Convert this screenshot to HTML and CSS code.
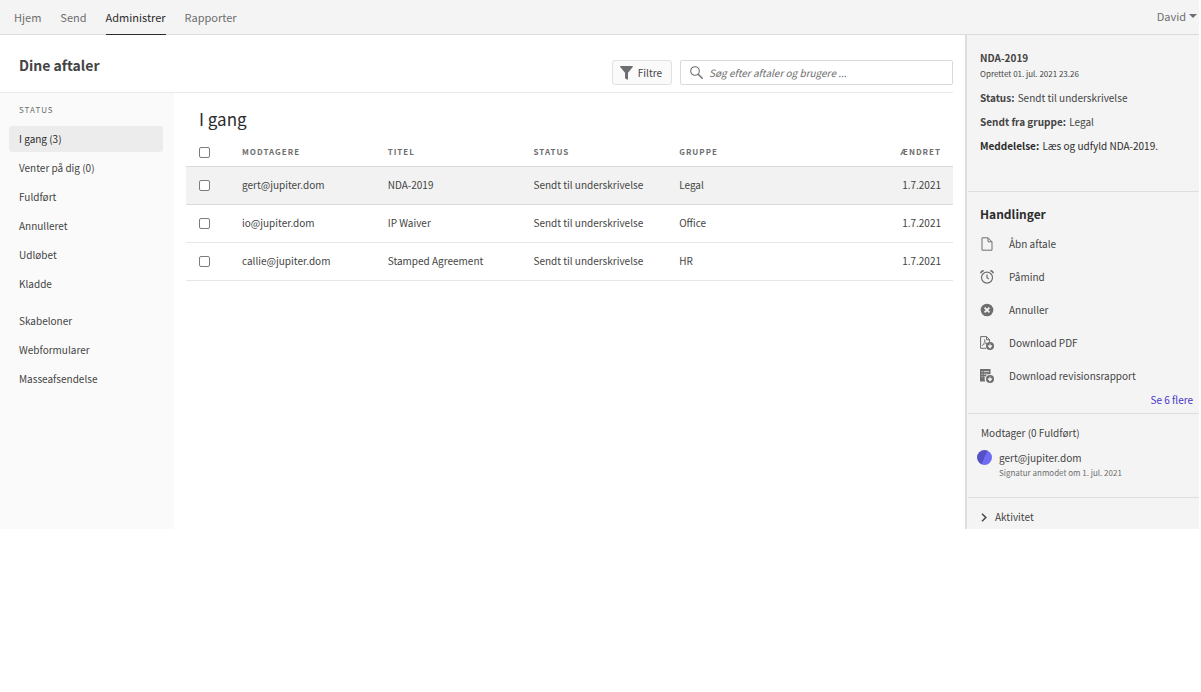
FILE: index.html
```html
<!DOCTYPE html>
<html lang="da">
<head>
<meta charset="utf-8">
<title>Dine aftaler</title>
<link rel="stylesheet" href="styles.css">
</head>
<body>
<div class="app">
  <header class="topbar">
    <nav class="tabs">
      <a class="tab" href="#">Hjem</a>
      <a class="tab" href="#">Send</a>
      <a class="tab tab-active" href="#">Administrer</a>
      <a class="tab" href="#">Rapporter</a>
    </nav>
    <button class="user" type="button">David <span class="caret"></span></button>
  </header>

  <div class="body">
    <div class="workspace">
      <div class="page-head">
        <h1 class="page-title">Dine aftaler</h1>
        <button class="filter" type="button">
          <svg width="13" height="14" viewBox="0 0 13 14"><path fill="#6e6e6e" d="M.7 0h11.6c.6 0 .8.6.5 1L8 6.8V13c0 .6-.6 1-1.100.600L5.300 12.500A.8.8 0 0 1 5 12V6.800L.2 1C-.1.600.1 0 .7 0z"/></svg>
          Filtre
        </button>
        <label class="search">
          <svg width="13" height="13" viewBox="0 0 13 13" fill="none" stroke="#6e6e6e"><circle cx="5" cy="5" r="4.300" stroke-width="1.100"/><path d="M8.200 8.200l4 4" stroke-width="1.400" stroke-linecap="round"/></svg>
          <input class="search-input" type="text" aria-label="Søg" placeholder="Søg efter aftaler og brugere ...">
        </label>
      </div>

      <div class="columns">
        <nav class="sidebar">
          <h2 class="sidebar-label">STATUS</h2>
          <div class="side-group">
            <a class="side-item side-active" href="#">I gang (3)</a>
            <a class="side-item" href="#">Venter på dig (0)</a>
            <a class="side-item" href="#">Fuldført</a>
            <a class="side-item" href="#">Annulleret</a>
            <a class="side-item" href="#">Udløbet</a>
            <a class="side-item" href="#">Kladde</a>
          </div>
          <div class="side-group">
            <a class="side-item" href="#">Skabeloner</a>
            <a class="side-item" href="#">Webformularer</a>
            <a class="side-item" href="#">Masseafsendelse</a>
          </div>
        </nav>

        <main class="content">
          <h2 class="list-title">I gang</h2>
          <table class="list">
            <colgroup>
              <col class="col-check"><col class="col-data"><col class="col-data"><col class="col-data"><col>
              <col class="col-date">
            </colgroup>
            <thead>
              <tr>
                <th><input class="check" type="checkbox" aria-label="Vælg alle"></th>
                <th>MODTAGERE</th><th>TITEL</th><th>STATUS</th><th>GRUPPE</th><th class="date">ÆNDRET</th>
              </tr>
            </thead>
            <tbody>
              <tr class="selected">
                <td><input class="check" type="checkbox" aria-label="Vælg NDA-2019"></td>
                <td>gert@jupiter.dom</td><td>NDA-2019</td><td>Sendt til underskrivelse</td><td>Legal</td><td class="date">1.7.2021</td>
              </tr>
              <tr>
                <td><input class="check" type="checkbox" aria-label="Vælg IP Waiver"></td>
                <td>io@jupiter.dom</td><td>IP Waiver</td><td>Sendt til underskrivelse</td><td>Office</td><td class="date">1.7.2021</td>
              </tr>
              <tr>
                <td><input class="check" type="checkbox" aria-label="Vælg Stamped Agreement"></td>
                <td>callie@jupiter.dom</td><td>Stamped Agreement</td><td>Sendt til underskrivelse</td><td>HR</td><td class="date">1.7.2021</td>
              </tr>
            </tbody>
          </table>
        </main>
      </div>
    </div>

    <aside class="panel">
      <section class="section details">
        <h2 class="doc-title">NDA-2019</h2>
        <p class="small">Oprettet 01. jul. 2021 23.26</p>
        <p class="fact"><b>Status:</b> Sendt til underskrivelse</p>
        <p class="fact"><b>Sendt fra gruppe:</b> Legal</p>
        <p class="fact fact-dark"><b>Meddelelse:</b> Læs og udfyld NDA-2019.</p>
      </section>

      <section class="section actions">
        <h2 class="actions-title">Handlinger</h2>
        <button class="action" type="button">
          <svg width="14" height="14" viewBox="0 0 14 14" fill="none" stroke="#6e6e6e"><path d="M2 .8h6l4 4v8.400H2zM8 .8v4h4"/></svg>
          Åbn aftale
        </button>
        <button class="action" type="button">
          <svg width="14" height="14" viewBox="0 0 14 14" fill="none" stroke="#6e6e6e"><circle cx="7" cy="7.600" r="5.500" stroke-width="1.200"/><path d="M7 4.500v3.300l1.800 1.200" stroke-width="1.200"/><path d="M.8 3.300Q1 1 3.700.8M13.200 3.300Q13 1 10.300.8" stroke-width="1.600"/></svg>
          Påmind
        </button>
        <button class="action" type="button">
          <svg width="14" height="14" viewBox="0 0 14 14"><circle cx="7" cy="7" r="6.300" fill="#6e6e6e"/><path d="M4.600 4.600l4.800 4.800M9.400 4.600l-4.800 4.800" stroke="#f4f4f4" stroke-width="1.800"/></svg>
          Annuller
        </button>
        <button class="action" type="button">
          <svg width="14" height="14" viewBox="0 0 14 14"><path d="M6 12.300H.6V.6h5.900l3.100 3.100V6M6.500.6v3.100h3.100" fill="none" stroke="#6e6e6e"/><path d="M2 9.800C4 8.500 4.900 5.500 4.600 3.500 4.800 6 5.500 7.200 7.300 7.600 5 7.300 3.500 8.200 2 9.800z" fill="none" stroke="#6e6e6e" stroke-width=".7"/><circle cx="10" cy="10" r="4" fill="#6e6e6e"/><path d="M10 7.600v2.600M8.100 9.800h3.800L10 12.200z" fill="#f4f4f4" stroke="#f4f4f4" stroke-width=".9"/></svg>
          Download PDF
        </button>
        <button class="action" type="button">
          <svg width="14" height="14" viewBox="0 0 14 14"><path d="M0 0h10.500v5.200A5 5 0 0 0 5.200 12.500H0z" fill="#6e6e6e"/><path d="M1.500 2.600h1.200M3.800 2.600h5.200M1.500 5.200h1.200M3.800 5.200h4M1.500 7.800h1.200M3.800 7.800h1.200" stroke="#f4f4f4" stroke-width=".8"/><circle cx="10" cy="10" r="4" fill="#6e6e6e"/><path d="M10 7.600v2.600M8.100 9.800h3.800L10 12.200z" fill="#f4f4f4" stroke="#f4f4f4" stroke-width=".9"/></svg>
          Download revisionsrapport
        </button>
        <a class="more" href="#">Se 6 flere</a>
      </section>

      <section class="section recipients">
        <h2 class="recipients-title">Modtager (0 Fuldført)</h2>
        <div class="recipient">
          <span class="avatar"></span>
          <div>
            <p class="mail">gert@jupiter.dom</p>
            <p class="small muted">Signatur anmodet om 1. jul. 2021</p>
          </div>
        </div>
      </section>

      <button class="activity" type="button">
        <svg width="8" height="9" viewBox="0 0 8 9" fill="none" stroke="#4b4b4b" stroke-width="1.600"><path d="M2 .8l3.800 3.700L2 8.200"/></svg>
        Aktivitet
      </button>
    </aside>
  </div>
</div>
</body>
</html>
```
FILE: styles.css
```css
* { box-sizing: border-box; }

body {
  margin: 0;
  background: #fff;
  color: #444;
  font-family: "Noto Sans CJK JP", "Noto Sans", sans-serif;
  font-size: 10px;
  line-height: 16px;
}

h1, h2, p { margin: 0; }
a { color: inherit; text-decoration: none; }
button, input { font: inherit; color: inherit; }
button { border: 0; padding: 0; background: none; text-align: left; cursor: pointer; }
svg { flex: none; }

.app { margin-right: 2px; }

/* Top bar */
.topbar {
  display: flex;
  justify-content: space-between;
  height: 35px;
  padding-left: 14px;
  background: #f4f4f4;
  border-bottom: 1px solid #dcdcdc;
  font-size: 11px;
  color: #6e6e6e;
}
.tabs { display: flex; gap: 19px; }
.tab { height: 35px; line-height: 34px; }
.tab-active { color: #2c2c2c; border-bottom: 1px solid #2c2c2c; }
.user { display: flex; align-items: center; gap: 3px; height: 31px; padding-right: 2px; }
.caret { border: 4px solid transparent; border-top-color: #6e6e6e; border-bottom: 0; }

/* Work area */
.body { display: grid; grid-template-columns: minmax(0, 1fr) 234px; }
.workspace { display: flex; flex-direction: column; }
.page-head {
  display: flex;
  align-items: flex-end;
  gap: 8px;
  height: 58px;
  margin-right: 12px;
  padding: 0 0 7px 19px;
  border-bottom: 1px solid #e8e8e8;
}
.page-title { margin-right: auto; padding-bottom: 10px; font-size: 14px; line-height: 20px; }
.filter {
  display: flex;
  align-items: center;
  gap: 5px;
  height: 25px;
  padding: 0 9px 0 7px;
  border: 1px solid #e1e1e1;
  border-radius: 3px;
  background: #fafafa;
}
.search {
  display: flex;
  align-items: center;
  gap: 6px;
  width: 273px;
  height: 25px;
  padding: 0 9px;
  border: 1px solid #d9d9d9;
  border-radius: 2px;
}
.search-input { flex: 1; min-width: 0; padding: 0; border: 0; outline: 0; background: none; }
.search-input::placeholder { color: #6e6e6e; font-style: italic; opacity: 1; }

.columns { display: flex; flex: 1; }

/* Sidebar */
.sidebar { width: 174px; padding: 9px 11px 0 9px; background: #fafafa; }
.sidebar-label {
  margin-bottom: 8px;
  padding-left: 10px;
  font-size: 8px;
  font-weight: 400;
  letter-spacing: 1px;
  color: #6e6e6e;
}
.side-group { display: flex; flex-direction: column; gap: 3px; margin-bottom: 11px; }
.side-item { height: 26px; padding-left: 10px; line-height: 25px; border-radius: 3px; }
.side-active { background: #ececec; color: #2c2c2c; }

/* Agreement list */
.content { flex: 1; min-width: 0; padding: 14px 12px 0; }
.list-title { padding-left: 13px; font-size: 17px; font-weight: 400; line-height: 24px; color: #2c2c2c; }
.list { width: 100%; margin-top: 8px; border-collapse: collapse; table-layout: fixed; }
.col-check { width: 56px; }
.col-data { width: 19%; }
.col-date { width: 80px; }
.list th, .list td { padding: 0; text-align: left; white-space: nowrap; border-bottom: 1px solid #e6e6e6; }
.list th { height: 27px; font-size: 8px; letter-spacing: 1px; color: #6e6e6e; border-color: #dadada; }
.list td { height: 38px; }
.list .date { padding-right: 12px; text-align: right; }
.selected td { background: #f2f2f2; border-color: #dadada; }
.check {
  display: block;
  appearance: none;
  width: 11px;
  height: 11px;
  margin: 0 0 0 13px;
  border: 1px solid #7c7c7c;
  border-radius: 2px;
  background: #fff;
}

/* Details panel */
.panel { padding-left: 1px; background: #f4f4f4; border-left: 2px solid #dedede; }
.section { border-bottom: 1px solid #dedede; }
.details { height: 157px; padding: 15px 12px 0; }
.doc-title { font-size: 10px; line-height: 16px; }
.small { font-size: 8px; }
.fact { margin-top: 8px; }
.fact b { margin-right: 1px; }
.fact-dark { color: #2c2c2c; }
.actions { display: flex; flex-direction: column; padding: 12px 6px 5px 12px; }
.actions-title { margin-bottom: 3px; font-size: 12px; line-height: 20px; color: #2c2c2c; }
.action { display: flex; align-items: center; gap: 15px; height: 33px; }
.more { align-self: flex-end; color: #4b35c8; }
.recipients { height: 84px; padding: 11px 9px 0; }
.recipients-title { padding-left: 4px; font-size: 10px; font-weight: 400; }
.recipient { display: flex; gap: 7px; margin-top: 9px; }
.recipient p { line-height: 15px; }
.avatar {
  width: 15px;
  height: 15px;
  border-radius: 50%;
  background: linear-gradient(115deg, #5450c6 50%, #6f6cf3 50%);
}
.muted { color: #6e6e6e; }
.activity { display: flex; align-items: center; gap: 7px; padding: 11px 12px 4px; }
```
